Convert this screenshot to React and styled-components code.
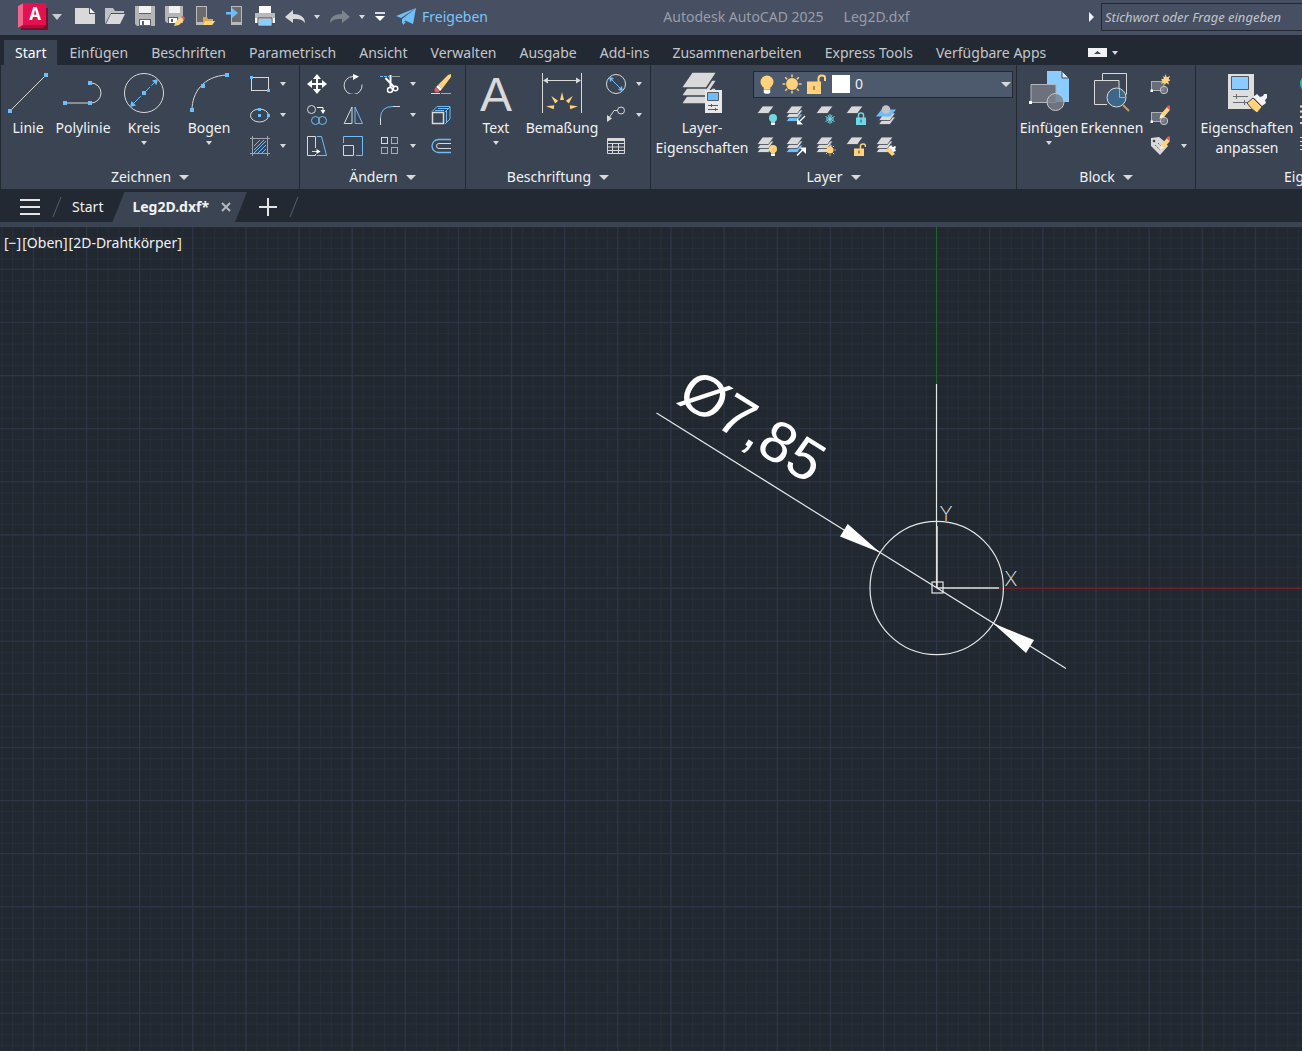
import React from 'react';
import styled, { createGlobalStyle } from 'styled-components';

const colors = {
    titlebar: '#475062',
    dark: '#222933',
    ribbon: '#3b4453',
    field: '#4d5a6e',
    text: '#f0f2f4',
    muted: '#c3c6ca',
    dim: '#989ea9',
    line: '#d9d9d9',
    blue: '#6ebdf8',
    paleblue: '#8accff',
    cyan: '#6fd8e2',
    yellow: '#ffd27b',
    red: '#f0575d',
    canvas: '#212830',
    gridMajor: '#2f3648',
    gridMinor: '#272e39'
};

const GlobalStyle = createGlobalStyle`
    * { box-sizing: border-box; }

    body {
        margin: 0;
        background: ${colors.canvas};
        font-family: "Noto Sans", "Open Sans", sans-serif;
        font-size: 14px;
        line-height: 20px;
        color: ${colors.text};
    }

    button, input, select {
        margin: 0;
        padding: 0;
        border: none;
        background: none;
        color: inherit;
        font: inherit;
    }

    svg { display: block; }
`;

const Window = styled.div`
    display: flex;
    flex-direction: column;
    min-height: 100vh;
    overflow: hidden;
`;

const TitleBar = styled.header`
    display: flex;
    align-items: center;
    height: 35px;
    padding: 0 0 1px 18px;
    background: ${colors.titlebar};
    white-space: nowrap;
`;

const AppButton = styled.button`
    flex: none;
    margin-right: 8px;
`;

const QuickButton = styled.button`
    display: flex;
    flex: none;
    align-items: center;
    justify-content: center;
    width: ${props => props.$width || 30}px;
    height: 32px;
`;

const ShareLink = styled.a`
    display: flex;
    align-items: center;
    gap: 6px;
    margin-left: 4px;
    color: #7cc5fa;
    text-decoration: none;
`;

const WindowTitle = styled.div`
    display: flex;
    flex: 1;
    gap: 20px;
    justify-content: center;
    padding-left: 4px;
    color: ${colors.dim};
`;

const SearchField = styled.input`
    flex: none;
    width: 201px;
    height: 28px;
    padding-left: 3px;
    border: 1px solid ${colors.dark};
    border-right: none;
    border-radius: 0;
    font-size: 13px;
    font-style: italic;

    &::placeholder { color: #c0c4cb; opacity: 1; }
`;

const TabBar = styled.nav`
    display: flex;
    align-items: flex-end;
    height: 30px;
    padding-left: 4px;
    background: ${colors.dark};
`;

const RibbonTab = styled.button`
    flex: none;
    height: 25px;
    padding: 0 11px 0 12px;
    background: ${props => props.$active ? colors.ribbon : 'transparent'};
    color: ${props => props.$active ? '#fff' : colors.muted};
    white-space: nowrap;

    &:first-child { padding: 0 11px; }
`;

const MinimizeButton = styled.button`
    display: flex;
    align-items: center;
    gap: 5px;
    height: 25px;
    margin-left: 31px;
`;

const Ribbon = styled.div`
    display: flex;
    height: 124px;
    border-left: 1px solid ${colors.dark};
    background: ${colors.ribbon};
    overflow: hidden;
`;

const PanelBox = styled.section`
    display: flex;
    flex: none;
    flex-direction: column;
    min-width: ${props => props.$min || 0}px;
    padding-top: 4px;
    border-right: 1px solid ${colors.dark};
`;

const PanelBody = styled.div`
    display: flex;
    height: 93px;
    padding-right: ${props => props.$end || 0}px;
`;

const PanelFooter = styled.button`
    display: flex;
    align-items: center;
    justify-content: center;
    gap: 8px;
    height: 27px;
    padding-top: 3px;
`;

const LargeButton = styled.button`
    display: flex;
    flex-direction: column;
    align-items: center;
    width: ${props => props.$width}px;
    padding-top: 2px;
    white-space: nowrap;

    .label { margin: 5px 0 3px; }
`;

const LargeLetter = styled.span`
    height: 42px;
    color: ${colors.line};
    font-family: "Liberation Sans", Arial, sans-serif;
    font-size: 48px;
    line-height: 48px;
`;

const ToolGrid = styled.div`
    display: grid;
    grid-template-columns: ${props => props.$columns};
    grid-auto-rows: 31px;
`;

const ToolButton = styled.button`
    display: flex;
    align-items: center;
    justify-content: center;
    padding-bottom: 1px;
`;

const LayerTools = styled.div`
    display: flex;
    flex-direction: column;
    width: 263px;
`;

const LayerField = styled.label`
    display: flex;
    flex: none;
    align-items: center;
    gap: 5px;
    height: 27px;
    margin: 2px 3px 2px 0;
    padding: 0 1px 1px 3px;
    border: 1px solid ${colors.dark};
    background: ${colors.field};

    select {
        flex: 1;
        appearance: none;
        outline: none;
    }
`;

const FileTabs = styled.div`
    display: flex;
    align-items: center;
    height: 38px;
    padding: 3px 0 0 15px;
    border-bottom: 5px solid ${colors.ribbon};
    background: ${colors.dark};
`;

const FileTab = styled.button`
    height: 30px;
    padding: 0 9px 0 3px;
    white-space: nowrap;
`;

const ActiveFileTab = styled.div`
    display: flex;
    align-items: center;
    gap: 11px;
    height: 30px;
    padding: 0 15px 0 20px;
    background: ${colors.ribbon};
    clip-path: polygon(12px 0, 100% 0, calc(100% - 12px) 100%, 0 100%);
    font-weight: 700;
    white-space: nowrap;
`;

const FileButton = styled.button`
    display: flex;
    flex: none;
    align-items: center;
    justify-content: center;
    width: ${props => props.$width}px;
    height: 30px;
`;

const Viewport = styled.main`
    position: relative;
    display: flex;
    flex: 1;
    min-height: 480px;
    background: ${colors.canvas};
`;

const Drawing = styled.svg`
    flex: 1;
    width: 100%;
`;

const ViewControls = styled.div`
    position: absolute;
    top: 6px;
    left: 4px;
    display: flex;
    gap: 1px;
`;

const Caret = ({ w = 6, h = 4, color = colors.line }) => (
    <svg width={w} height={h} viewBox="0 0 10 6" preserveAspectRatio="none" aria-hidden="true">
        <path d="M0 0H10L5 6Z" fill={color} />
    </svg>
);

const Icon = ({ name, size = 20, viewBox }) => (
    <svg width={size} height={size} viewBox={viewBox || `0 0 ${size} ${size}`} fill="none" stroke={colors.line} aria-hidden="true">
        {icons[name]}
    </svg>
);

// grip points at the ends and middles of the drawn shapes
const Grips = ({ at, s = 3 }) => (
    <g fill={colors.blue} stroke="none">
        {at.map(([x, y]) => <rect key={`${x},${y}`} x={x - s / 2} y={y - s / 2} width={s} height={s} />)}
    </g>
);

const Sheet = ({ y = 0, fill = colors.line }) => (
    <path d={`M5.5 ${y + 1}H17L11.5 ${y + 8.5}H0Z`} fill={fill} stroke={colors.ribbon} strokeWidth="0.8" />
);

const Stack = ({ accent }) => (
    <g>
        <Sheet y={8} fill={accent || colors.line} />
        <Sheet y={4} />
        <Sheet />
    </g>
);

const Pencil = () => (
    <g stroke="none">
        <path d="M9.5 15.5L11 11l6-7 3 3-6 7Z" fill={colors.yellow} />
        <path d="M9.5 15.5L11 11l2.8 2.8Z" fill="#f7efe2" />
        <path d="M16.5 4.2L18 2.5q2-.8 2.5 1.7L19.3 6.8Z" fill={colors.red} />
    </g>
);

const BlockShape = () => (
    <g>
        <rect x="1.5" y="7.5" width="12.5" height="9" fill="#686e7a" stroke="#aeb1b7" />
        <circle cx="14" cy="16" r="3.7" fill="#7d828c" fillOpacity="0.7" stroke="#c4c6ca" />
        <rect x="0.5" y="15.5" width="2.5" height="2.5" fill="#fff" stroke="none" />
    </g>
);

const Bulb = ({ color, x, y, r }) => (
    <g stroke="none">
        <circle cx={x} cy={y} r={r} fill={color} />
        <path d={`M${x - r / 2} ${y + r * 0.7}h${r}v${r * 0.4}h${-r}z`} fill={color} />
        <path d={`M${x - r / 2} ${y + r * 1.15}h${r}v${r * 0.5}l${-r / 4} ${r * 0.15}h${-r / 2}l${-r / 4} ${-r * 0.15}z`} fill="#fff" />
    </g>
);

const Sun = ({ x, y, r }) => (
    <g stroke={colors.yellow}>
        <circle cx={x} cy={y} r={r} fill={colors.yellow} stroke="none" />
        {[0, 45, 90, 135, 180, 225, 270, 315].map(a => (
            <path key={a} d={`M${x} ${y - r - 0.8}v${-r * 0.45}`} strokeWidth={r / 4} transform={`rotate(${a} ${x} ${y})`} />
        ))}
    </g>
);

const icons = {
    app: (
        <g stroke="none">
            <path d="M3 5h27v22H3z" fill="#7d0b2c" />
            <path d="M0 3L6 0v22L0 25z" fill="#f0668d" />
            <path d="M5 0h23v22H5z" fill="#e51050" />
            <path d="M0 25l5-3h23l-3 3z" fill="#b00d3f" />
        </g>
    ),
    newFile: (
        <g stroke="none">
            <path d="M0 3h14v6h6v10H0z" fill={colors.line} />
            <path d="M15 3l5 5h-5z" fill="#fff" />
        </g>
    ),
    open: (
        <g stroke="none">
            <path d="M0 19V3h8l2 3h9v2H6z" fill="#bfc1c4" />
            <path d="M6 9h14l-5 10H1z" fill={colors.line} />
        </g>
    ),
    save: (
        <g stroke="none">
            <path d="M0 1h20v20H2l-2-2z" fill="#b5b5b7" />
            <path d="M4 1h12v8H4z" fill="#f1f1f1" />
            <path d="M4 8h12v1H4zM4 14h12v7H4z" fill="#58616f" />
            <path d="M5 15h10v5H5z" fill="#fff" />
            <path d="M7 16h2v4H7z" fill="#58616f" />
        </g>
    ),
    saveAs: (
        <g stroke="none">
            <path d="M0 1h18v17H2l-2-2z" fill="#b5b5b7" />
            <path d="M4 1h11v7H4z" fill="#f1f1f1" />
            <path d="M3 12h10v6H3z" fill="#58616f" />
            <path d="M4 13h8v5H4z" fill="#fff" />
            <path d="M6 14h2v3H6z" fill="#58616f" />
            <path d="M9 21l2-5 5-4 3 3-5 5z" fill={colors.yellow} />
            <path d="M16 12l2-1 2 2-1 2z" fill={colors.red} />
        </g>
    ),
    openDevice: (
        <g stroke="none">
            <path d="M1 1h11v19H1z" fill="#b9babc" />
            <path d="M2 2h9v15H2z" fill="#6b6b6b" />
            <path d="M8 20v-8h4l1 2h5v2h2l-3 4z" fill="#d9a94c" />
            <path d="M10 16h10l-3 4H8z" fill={colors.yellow} />
        </g>
    ),
    saveDevice: (
        <g stroke="none">
            <path d="M6 1h11v19H6z" fill="#b9babc" />
            <path d="M7 2h9v15H7z" fill="#6b6b6b" />
            <path d="M1 7h6V3l6 5-6 5V9.500H1z" fill="#6ebcf6" />
        </g>
    ),
    print: (
        <g stroke="none">
            <path d="M4 1h12v7H4z" fill="#fff" />
            <path d="M0 8h20v5H0z" fill="#b8b9bb" />
            <path d="M0 13h20v5H0z" fill="#fff" />
            <path d="M3 13h14v8H3z" fill="#fff" stroke={colors.ribbon} />
            <path d="M4 14h12v6H4z" fill={colors.paleblue} />
        </g>
    ),
    undo: <path d="M0 12L8 5v4c7 0 12 3 12 9-3-4-6-4-12-4v4z" fill={colors.line} stroke="none" />,
    redo: <path d="M20 12L12 5v4C5 9 0 12 0 18c3-4 6-4 12-4v4z" fill="#7d838d" stroke="none" />,
    send: (
        <g stroke="none" fill="#6fbff8">
            <path d="M0 9L20 1 5 11z" />
            <path d="M20 1L6 12v5z" />
            <path d="M20 1L8 13l9 4z" />
            <path d="M7 14l3 1-3 3z" />
        </g>
    ),
    line: <g><path d="M3 40L39 4" /><Grips s={4} at={[[3, 40], [39, 4]]} /></g>,
    polyline: <g><path d="M2 32H29a10 10 0 0 0 0-20" /><Grips s={4} at={[[3, 32], [28, 32], [28, 12]]} /></g>,
    circle: (
        <g>
            <circle cx="21" cy="22" r="19.5" />
            <path d="M10 33L32 11" stroke={colors.blue} strokeDasharray="11 2" />
            <path d="M7 36l1.500-6 4.500 4.500zM35 8l-6 1.500 4.500 4.500z" fill={colors.blue} stroke="none" />
            <Grips s={4} at={[[21, 22]]} />
        </g>
    ),
    arc: <g><path d="M4 39C4 22 15 5 39 4" /><Grips s={4} at={[[4, 39], [15, 15], [39, 4]]} /></g>,
    rect: <g><rect x="1.5" y="3.5" width="17" height="13" /><Grips at={[[1.5, 3.5], [18.5, 16.5]]} /></g>,
    ellipse: <g><ellipse cx="9.5" cy="10.5" rx="9" ry="6.5" /><Grips at={[[9.5, 4.5], [9.5, 10.5], [18.5, 10.5]]} /></g>,
    hatch: (
        <g>
            <path d="M4 10l6-6M4 14L14 4M4 17L16 5M8 17l8-8M12 17l4-4" stroke={colors.blue} />
            <path d="M2.5 0v20M17.5 0v20M0 2.5h20M0 17.5h20" stroke="#a0a5ad" />
        </g>
    ),
    move: (
        <g stroke="none" fill="#fff">
            <path d="M9 4h2v12H9zM4 9h12v2H4z" />
            <path d="M10 0l4 5H6zM10 20l4-5H6zM0 10l5-4v8zM20 10l-5-4v8z" />
        </g>
    ),
    rotate: <g><path d="M19 10.5A9 9 0 1 1 10 2.5" /><path d="M10 0l6 2.5L10 6z" fill="#fff" stroke="none" /></g>,
    trim: (
        <g>
            <path d="M0 2.5h9" stroke={colors.blue} strokeDasharray="3 1" />
            <path d="M12 2.5h8" stroke="#979ca5" />
            <path d="M5.5 4l8.500 9M10.500 1v12" stroke="#fff" strokeWidth="2" />
            <circle cx="10" cy="16" r="2.5" stroke="#fff" strokeWidth="1.5" />
            <circle cx="15.5" cy="14.5" r="2.3" stroke="#fff" strokeWidth="1.5" />
        </g>
    ),
    erase: (
        <g>
            <path d="M0 19.5h9" />
            <path d="M10 19.5h10" stroke={colors.blue} />
            <path d="M7 11L17 1l3-1v3L11 15z" fill={colors.yellow} stroke="none" />
            <path d="M5 13l2-2 4 4-2 2z" fill="#fff" stroke="none" />
            <path d="M5 13l4 4-2 1.500q-4 .5-3.500-3.500z" fill={colors.red} stroke="none" />
        </g>
    ),
    copy: (
        <g>
            <circle cx="4.5" cy="4.5" r="4" />
            <circle cx="8.5" cy="15.5" r="4" stroke={colors.blue} />
            <circle cx="15.5" cy="15.5" r="4" stroke={colors.blue} />
            <path d="M10 2.5h6V6" stroke="#fff" />
            <path d="M13.5 5h5L16 9z" fill="#fff" stroke="none" />
        </g>
    ),
    mirror: <g><path d="M1.2 18.5L9 2v16.500z" /><path d="M19.5 18.5L12 2v16.500z" stroke={colors.blue} /></g>,
    fillet: (
        <g>
            <path d="M.5 20v-7M13 1.5h7" />
            <path d="M.5 13Q.5 1.5 13 1.5" stroke={colors.blue} />
        </g>
    ),
    box: (
        <g>
            <path d="M1 6.5L6 1.5h13V14l-5 5M14 7l5-5M7 3.5h10M4 5.5h9" stroke={colors.blue} />
            <rect x="1.5" y="7.5" width="11" height="11" strokeWidth="1.5" />
            <path d="M15.5 5.5v12" stroke={colors.blue} />
        </g>
    ),
    stretch: (
        <g>
            <path d="M10 .5h4.500l5 19H10" stroke={colors.blue} />
            <path d="M8.5 12V.5h-8v19h8V18M5 15.5h7" />
            <path d="M9.5 13l4 2.500-4 2.500z" fill="#fff" stroke="none" />
        </g>
    ),
    scale: <g><path d="M.5 7V.5h19v19H13" stroke={colors.blue} /><path d="M.5 9.5h10v10H.5z" /></g>,
    array: (
        <g stroke={colors.blue}>
            <rect x="1.5" y="1.5" width="6" height="6" stroke={colors.line} />
            <rect x="11.5" y="1.5" width="6" height="6" />
            <rect x="1.5" y="11.5" width="6" height="6" />
            <rect x="11.5" y="11.5" width="6" height="6" />
        </g>
    ),
    offset: <g><path d="M20 3.5H7.500a6.500 6.500 0 0 0 0 13H20" stroke={colors.blue} strokeWidth="1.3" /><path d="M20 7.5H8a2.500 2.500 0 0 0 0 5H20" /></g>,
    dimension: (
        <g>
            <path d="M1.5 2v40M40.5 2v40M3 9.5h36" />
            <path d="M2 9.5l5-3v6zM40 9.5l-5-3v6z" fill={colors.line} stroke="none" />
            <g fill={colors.yellow} stroke="none">
                {[-84, -42, 0, 42, 84].map(a => <path key={a} d="M21 21l2 8h-4z" transform={`rotate(${a} 21 37)`} />)}
            </g>
        </g>
    ),
    diameter: (
        <g>
            <circle cx="10" cy="10" r="9.5" />
            <path d="M5 5l10 10" stroke={colors.blue} />
            <path d="M3 3l5 1-4 4zM17 17l-5-1 4-4z" fill={colors.blue} stroke="none" />
        </g>
    ),
    leader: (
        <g>
            <circle cx="15" cy="5.5" r="3.5" />
            <path d="M11.5 5.5H8L3 13" />
            <path d="M1 17V10l5 3.500z" fill={colors.line} stroke="none" />
        </g>
    ),
    table: (
        <g>
            <path d="M1.5 2.5h17v15h-17z" />
            <path d="M1 4h18" strokeWidth="2" />
            <path d="M2 7.5h16M2 11h16M2 14.5h16M6.5 7v10M12.5 7v10" />
        </g>
    ),
    layerProps: (
        <g stroke={colors.ribbon}>
            {[16, 8, 0].map(y => <path key={y} d={`M11 ${y + 1}H36L25.5 ${y + 17}H0Z`} fill={colors.line} strokeWidth="1.5" />)}
            <path d="M24 19h17v23H24z" fill="#e8e8e8" stroke="none" />
            <path d="M26.5 21.5h11v8h-11z" fill={colors.blue} stroke="#565c66" />
            <path d="M27 34.5h10M27 38.5h10M30.5 33v3M34.5 37v3" stroke="#565c66" />
        </g>
    ),
    layerOff: <g><Sheet /><Bulb color={colors.cyan} x={16} y={13} r={4} /></g>,
    layerIsolate: <g><Stack accent={colors.blue} /><path d="M19 11l-5 5" stroke="#fff" strokeWidth="1.5" /><path d="M11 19.5v-6l6 6z" fill="#fff" stroke="none" /></g>,
    layerFreeze: <g><Sheet /><path d="M14 9v10M9.5 11.5l9 5M18.5 11.5l-9 5M12 10l4 8M16 10l-4 8M10 14h8" stroke={colors.cyan} /></g>,
    layerLock: (
        <g>
            <Sheet />
            <path d="M12.5 13v-3q0-2 2.500-2t2.500 2v3" stroke={colors.cyan} strokeWidth="1.5" />
            <path d="M10 12.5h10V20H10z" fill={colors.cyan} stroke="none" />
            <path d="M15 14.5v3" stroke={colors.ribbon} />
        </g>
    ),
    layerCurrent: (
        <g transform="translate(0 3)">
            <g transform="translate(2.500 0)"><Sheet y={8} /><Sheet y={4} /></g>
            <path d="M5.5 1.5H20L14.5 8.5H0z" fill={colors.blue} stroke="none" />
            <circle cx="10" cy="1.5" r="4.3" fill="#c2c4c7" stroke="none" />
        </g>
    ),
    layerOn: <g><Stack /><Bulb color={colors.yellow} x={16} y={13} r={4} /></g>,
    layerUnisolate: <g><Stack accent={colors.blue} /><path d="M11 19.5l6-6" stroke="#fff" strokeWidth="1.5" /><path d="M13.5 11.5H20V18z" fill="#fff" stroke="none" /></g>,
    layerThaw: <g><Stack /><Sun x={14} y={14} r={3.5} /></g>,
    layerUnlock: (
        <g>
            <Sheet />
            <path d="M14.5 13v-3q0-2 2.500-2t2.500 2v1" stroke={colors.yellow} strokeWidth="1.5" />
            <path d="M8 12.5h10V20H8z" fill={colors.yellow} stroke="none" />
            <path d="M13 14.5v3" stroke={colors.ribbon} />
        </g>
    ),
    layerMatch: (
        <g>
            <Stack />
            <path d="M10 14l3-3 6 7-3 2z" fill={colors.yellow} stroke="none" />
            <path d="M13 11l2-1 2 1 2-1 1 1-1 2 1 2-3 1z" fill="#fff" stroke="none" />
        </g>
    ),
    bulb: <Bulb color={colors.yellow} x={10} y={8} r={6.5} />,
    sun: <Sun x={10} y={10} r={6} />,
    unlock: (
        <g>
            <path d="M11.5 9V4.5Q11.5 1.5 15 1.5T18 4.5V7" stroke={colors.yellow} strokeWidth="2" />
            <path d="M0 7.5h14V20H0z" fill={colors.yellow} stroke="none" />
            <path d="M7 12v4" stroke="#8a7442" strokeWidth="1.5" />
        </g>
    ),
    insert: (
        <g>
            <path d="M19 0h15l7 7v24H19z" fill={colors.paleblue} stroke="none" />
            <path d="M34 0v7h7z" fill="#d8eeff" stroke={colors.ribbon} />
            <path d="M3 13.5h25v18H3z" fill="#6c717d" stroke="#b3b6bb" />
            <circle cx="27.5" cy="31" r="8.5" fill="#7c818b" fillOpacity="0.8" stroke="#c4c6ca" />
            <path d="M1 30h3v3H1z" fill="#fff" stroke="none" />
        </g>
    ),
    detect: (
        <g>
            <path d="M3.5 9.5h25v24h-25z" fill="#4a505d" stroke="none" />
            <path d="M11.5 9V2.5h24v21" />
            <path d="M16 33.5H3.5v-24h24.500V17" />
            <path d="M32 34l6 6" stroke="#c79a5c" strokeWidth="2" />
            <circle cx="25.5" cy="26.5" r="9.5" fill="#3d6689" />
            <path d="M28.5 18v8.500h6" stroke={colors.blue} />
        </g>
    ),
    blockCreate: (
        <g>
            <BlockShape />
            <path d="M15.5 0l1.200 3.200L20 2l-1.300 3 2 1.500-2.500.8.8 3.200-2.800-1.400-1.200 1.700-1-2-3 1 1.300-2.700L11 5.500l3-1L12.500 2l2.200 1z" fill={colors.yellow} stroke="none" />
        </g>
    ),
    blockEdit: <g><BlockShape /><g transform="translate(0 -2)"><Pencil /></g></g>,
    attributes: (
        <g>
            <path d="M1 2l8-1 5 4 4 5-8 9-9-9z" fill={colors.line} stroke="none" />
            <circle cx="4" cy="5" r="1.3" fill={colors.ribbon} stroke="none" />
            <path d="M5 9l5 5M8 7l4 4" stroke="#6c717d" strokeDasharray="2 1" />
            <g transform="translate(0 -2)"><Pencil /></g>
        </g>
    ),
    match: (
        <g stroke="none">
            <path d="M2 3h26v35H2z" fill="#dedede" />
            <path d="M5.5 5.5h17v13h-17z" fill={colors.paleblue} stroke="#565c66" />
            <path d="M7 25.5h15M7 31.5h15M10.5 23v5M18.5 29v5" stroke="#686e78" />
            <path d="M21 32l6-5 9 9-5 6q-6-4-10-10z" fill={colors.yellow} stroke={colors.ribbon} />
            <path d="M27 26l4-3 3 3 3-1 1-2h3v4l-2 2 1 3-4 3z" fill="#f4f4f4" />
        </g>
    ),
    colorWheel: (
        <g stroke="none">
            <circle cx="10" cy="10" r="10" fill="#27a9dc" />
            <path d="M10 0A10 10 0 0 0 0 10h10z" fill="#35c46d" />
        </g>
    ),
    lineWeight: <path d="M0 1.5h20M0 6.5h20M0 12h20M0 18h20" strokeWidth="2" />,
    lineType: <path d="M0 1.5h20M0 5.5h20M0 9.5h20M0 13.5h20" strokeDasharray="4 2" />
};

const AppMark = () => (
    <svg width="44" height="28" aria-hidden="true">
        {icons.app}
        <text x="17" y="17" fill="#fff" fontFamily="Open Sans, sans-serif" fontSize="17" fontWeight="700" textAnchor="middle">A</text>
        <path d="M34 11h10l-5 6z" fill="#c8cbd0" />
    </svg>
);

const QuickTool = ({ icon, label, width }) => (
    <QuickButton $width={width} aria-label={label}>
        {icon ? <Icon name={icon} size={22} viewBox="-1 1 22 22" /> : <Caret />}
    </QuickButton>
);

const Tool = ({ icon, label }) => (
    <ToolButton aria-label={label}>
        {icon ? <Icon name={icon} /> : <Caret />}
    </ToolButton>
);

const Large = ({ icon, letter, lines, width, more }) => (
    <LargeButton $width={width}>
        {letter ? <LargeLetter aria-hidden="true">{letter}</LargeLetter> : <Icon name={icon} size={42} />}
        <span className="label">
            {lines.map((line, i) => <React.Fragment key={line}>{i > 0 && <br />}{line}</React.Fragment>)}
        </span>
        {more && <Caret />}
    </LargeButton>
);

const Panel = ({ title, end, min, children }) => (
    <PanelBox $min={min}>
        <PanelBody $end={end}>{children}</PanelBody>
        <PanelFooter>{title}<Caret w={10} h={5} /></PanelFooter>
    </PanelBox>
);

const ribbonTabs = [
    'Start', 'Einfügen', 'Beschriften', 'Parametrisch', 'Ansicht', 'Verwalten', 'Ausgabe',
    'Add-ins', 'Zusammenarbeiten', 'Express Tools', 'Verfügbare Apps'
];

const quickTools = [
    { icon: 'newFile', label: 'Neu' },
    { icon: 'open', label: 'Öffnen' },
    { icon: 'save', label: 'Speichern' },
    { icon: 'saveAs', label: 'Speichern unter' },
    { icon: 'openDevice', label: 'Aus Web und Mobile öffnen' },
    { icon: 'saveDevice', label: 'In Web und Mobile speichern' },
    { icon: 'print', label: 'Plotten' },
    { icon: 'undo', label: 'Rückgängig' },
    { label: 'Rückgängig-Liste', width: 14 },
    { icon: 'redo', label: 'Wiederherstellen', width: 32 },
    { label: 'Wiederherstellen-Liste', width: 12 }
];

const Slash = () => (
    <svg width="10" height="20" aria-hidden="true"><path d="M1 20L9 0" stroke="#565f6f" /></svg>
);

const Canvas = () => (
    <Drawing role="img" aria-label="Leg2D">
        <defs>
            <pattern id="minor" x="936.5" y="361" width="10.626" height="10.626" patternUnits="userSpaceOnUse">
                <path d="M.5 0V10.626M0 .5H10.626" stroke={colors.gridMinor} fill="none" />
            </pattern>
            <pattern id="major" x="936" y="360.5" width="53.13" height="53.13" patternUnits="userSpaceOnUse">
                <path d="M.5 0V53.13M0 .5H53.13" stroke={colors.gridMajor} fill="none" />
            </pattern>
        </defs>
        <rect width="100%" height="100%" fill="url(#minor)" />
        <rect width="100%" height="100%" fill="url(#major)" />

        <path d="M936.5 0V157" stroke="#1d6420" />
        <line x1="999" y1="361.5" x2="100%" y2="361.5" stroke="#6f242b" />
        <path d="M936.5 157V361" stroke="#e2eadf" strokeWidth="1.2" />
        <path d="M937 299V361M937 361H999" stroke="#e4dedd" strokeWidth="1.5" fill="none" />

        <g stroke="#e6e7e8" fill="none">
            <circle cx="936.7" cy="361" r="66.7" strokeWidth="1.2" />
            <rect x="932" y="355" width="11" height="11" strokeWidth="1.2" />
            <path d="M656.5 186L1066 441.5" strokeWidth="1.2" />
        </g>
        <path d="M880 325.5L847.7 297 840 309.5ZM993 396.3L1034 413 1026 426Z" fill="#fff" />

        <text fill="#fff" fontFamily="Liberation Sans, Arial, sans-serif" fontSize="58" transform="translate(675 174) rotate(31.9)">
            Ø7,85
        </text>
        <g fill="#e6e7e8" fontFamily="Inter, sans-serif" fontWeight="200" fontSize="20" textAnchor="middle">
            <text x="946" y="294">Y</text>
            <text x="1011" y="359">X</text>
        </g>
    </Drawing>
);

const App = () => {
    const [activeTab, setActiveTab] = React.useState('Start');

    return (
        <Window>
            <GlobalStyle />
            <TitleBar>
                <AppButton aria-label="Anwendungsmenü"><AppMark /></AppButton>
                {quickTools.map(tool => <QuickTool key={tool.label} {...tool} />)}
                <QuickButton $width={24} aria-label="Schnellzugriff anpassen">
                    <svg width="10" height="10" aria-hidden="true">
                        <path d="M0 1h10" stroke={colors.line} strokeWidth="2" />
                        <path d="M0 4h10L5 9z" fill="#fff" />
                    </svg>
                </QuickButton>
                <ShareLink href="#freigeben"><Icon name="send" />Freigeben</ShareLink>
                <WindowTitle><span>Autodesk AutoCAD 2025</span><span>Leg2D.dxf</span></WindowTitle>
                <QuickButton $width={20} aria-label="Suchleiste einklappen">
                    <svg width="5" height="10" aria-hidden="true"><path d="M0 0L5 5 0 10z" fill={colors.text} /></svg>
                </QuickButton>
                <SearchField aria-label="Suche" placeholder="Stichwort oder Frage eingeben" />
            </TitleBar>

            <TabBar>
                {ribbonTabs.map(tab => (
                    <RibbonTab key={tab} $active={tab === activeTab} onClick={() => setActiveTab(tab)}>{tab}</RibbonTab>
                ))}
                <MinimizeButton aria-label="Multifunktionsleiste minimieren">
                    <svg width="19" height="9" aria-hidden="true">
                        <path d="M0 0h19v9H0z" fill="#f2f2f2" />
                        <path d="M6 6h7L9.5 3z" fill="#444" />
                    </svg>
                    <Caret />
                </MinimizeButton>
            </TabBar>

            <Ribbon>
                <Panel title="Zeichnen" end={12}>
                    <Large icon="line" lines={['Linie']} width={54} />
                    <Large icon="polyline" lines={['Polylinie']} width={56} />
                    <Large icon="circle" lines={['Kreis']} width={66} more />
                    <Large icon="arc" lines={['Bogen']} width={64} more />
                    <ToolGrid $columns="38px 8px">
                        <Tool icon="rect" label="Rechteck" />
                        <Tool label="Rechteck-Optionen" />
                        <Tool icon="ellipse" label="Ellipse" />
                        <Tool label="Ellipse-Optionen" />
                        <Tool icon="hatch" label="Schraffur" />
                        <Tool label="Schraffur-Optionen" />
                    </ToolGrid>
                </Panel>

                <Panel title="Ändern" end={1}>
                    <ToolGrid $columns="34px 38px 36px 10px 46px">
                        <Tool icon="move" label="Schieben" />
                        <Tool icon="rotate" label="Drehen" />
                        <Tool icon="trim" label="Stutzen" />
                        <Tool label="Stutzen-Optionen" />
                        <Tool icon="erase" label="Löschen" />
                        <Tool icon="copy" label="Kopieren" />
                        <Tool icon="mirror" label="Spiegeln" />
                        <Tool icon="fillet" label="Abrunden" />
                        <Tool label="Abrunden-Optionen" />
                        <Tool icon="box" label="Ursprung" />
                        <Tool icon="stretch" label="Strecken" />
                        <Tool icon="scale" label="Varia" />
                        <Tool icon="array" label="Reihe" />
                        <Tool label="Reihe-Optionen" />
                        <Tool icon="offset" label="Versetzen" />
                    </ToolGrid>
                </Panel>

                <Panel title="Beschriftung" end={6}>
                    <Large letter="A" lines={['Text']} width={60} more />
                    <Large icon="dimension" lines={['Bemaßung']} width={72} />
                    <ToolGrid $columns="36px 10px">
                        <Tool icon="diameter" label="Durchmesser" />
                        <Tool label="Bemaßungsarten" />
                        <Tool icon="leader" label="Führungslinie" />
                        <Tool label="Führungslinie-Optionen" />
                        <Tool icon="table" label="Tabelle" />
                    </ToolGrid>
                </Panel>

                <Panel title="Layer">
                    <Large icon="layerProps" lines={['Layer-', 'Eigenschaften']} width={102} />
                    <LayerTools>
                        <LayerField>
                            <Icon name="bulb" />
                            <Icon name="sun" />
                            <Icon name="unlock" />
                            <svg width="18" height="18" aria-hidden="true"><path d="M0 0h18v18H0z" fill="#fff" /></svg>
                            <select aria-label="Layer" defaultValue="0"><option>0</option></select>
                            <Caret w={10} h={5} />
                        </LayerField>
                        <ToolGrid $columns="28px repeat(4, 30px)">
                            <Tool icon="layerOff" label="Aus" />
                            <Tool icon="layerIsolate" label="Isolieren" />
                            <Tool icon="layerFreeze" label="Frieren" />
                            <Tool icon="layerLock" label="Sperren" />
                            <Tool icon="layerCurrent" label="Aktuell machen" />
                            <Tool icon="layerOn" label="Alle Layer ein" />
                            <Tool icon="layerUnisolate" label="Isolierung aufheben" />
                            <Tool icon="layerThaw" label="Alle Layer tauen" />
                            <Tool icon="layerUnlock" label="Entsperren" />
                            <Tool icon="layerMatch" label="Layer anpassen" />
                        </ToolGrid>
                    </LayerTools>
                </Panel>

                <Panel title="Block" end={4}>
                    <Large icon="insert" lines={['Einfügen']} width={64} more />
                    <Large icon="detect" lines={['Erkennen']} width={62} />
                    <ToolGrid $columns="34px 14px">
                        <Tool icon="blockCreate" label="Block erstellen" />
                        <span />
                        <Tool icon="blockEdit" label="Block bearbeiten" />
                        <span />
                        <Tool icon="attributes" label="Attribute bearbeiten" />
                        <Tool label="Attribut-Optionen" />
                    </ToolGrid>
                </Panel>

                <Panel title="Eigenschaften" min={288}>
                    <Large icon="match" lines={['Eigenschaften', 'anpassen']} width={102} />
                    <ToolGrid $columns="24px">
                        <Tool icon="colorWheel" label="Objektfarbe" />
                        <Tool icon="lineWeight" label="Linienstärke" />
                        <Tool icon="lineType" label="Linientyp" />
                    </ToolGrid>
                </Panel>
            </Ribbon>

            <FileTabs>
                <FileButton $width={30} aria-label="Dateiregister-Menü">
                    <svg width="20" height="16" aria-hidden="true"><path d="M0 1h20M0 8h20M0 15h20" stroke="#e4e4e4" strokeWidth="2" /></svg>
                </FileButton>
                <FileButton as="span" $width={24}><Slash /></FileButton>
                <FileTab>Start</FileTab>
                <ActiveFileTab>
                    <span>Leg2D.dxf*</span>
                    <FileButton $width={12} aria-label="Schließen">
                        <svg width="10" height="10" aria-hidden="true"><path d="M1 1l8 8M9 1L1 9" stroke="#b4b8bf" strokeWidth="2" /></svg>
                    </FileButton>
                </ActiveFileTab>
                <FileButton $width={42} aria-label="Neue Zeichnung">
                    <svg width="18" height="18" aria-hidden="true"><path d="M9 0v18M0 9h18" stroke="#e4e4e4" strokeWidth="2" /></svg>
                </FileButton>
                <Slash />
            </FileTabs>

            <Viewport>
                <Canvas />
                <ViewControls>
                    <button>[−]</button>
                    <button>[Oben]</button>
                    <button>[2D-Drahtkörper]</button>
                </ViewControls>
            </Viewport>
        </Window>
    );
};

export default App;
